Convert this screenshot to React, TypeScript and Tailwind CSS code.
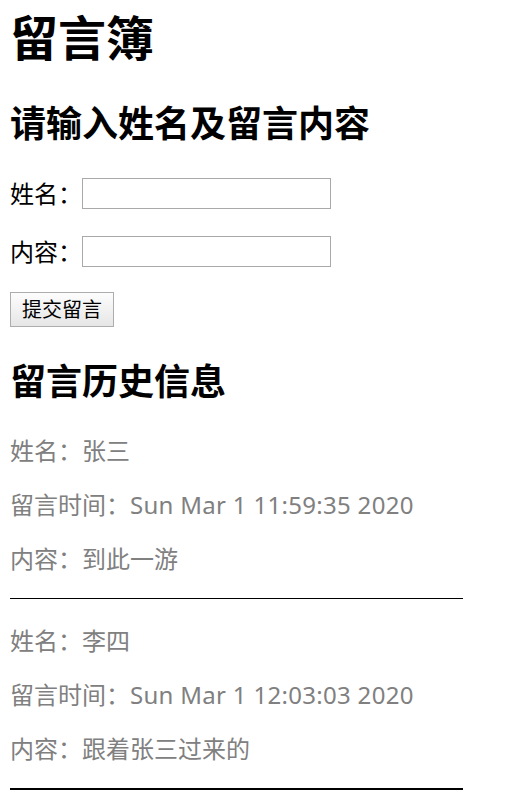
import { useState } from 'react'

const messages = [
  { name: '张三', time: 'Sun Mar 1 11:59:35 2020', content: '到此一游' },
  { name: '李四', time: 'Sun Mar 1 12:03:03 2020', content: '跟着张三过来的' },
]

const font = "font-['Noto_Sans','Noto_Sans_CJK_SC',sans-serif]"

export default function App() {
  const [name, setName] = useState('')
  const [content, setContent] = useState('')

  return (
    <div className={`${font} min-h-[809px] bg-white px-[10px] text-black`}>
      <h1 className="mt-[6px] text-[48px] font-bold leading-[64px]">留言簿</h1>
      <h2 className="mt-[30px] text-[36px] font-bold leading-[48px]">请输入姓名及留言内容</h2>

      <div className="mt-[30px] flex h-[31px] items-center">
        <label className="text-[24px] leading-[31px]">姓名：</label>
        <input
          value={name}
          onChange={(e) => setName(e.target.value)}
          className="h-[31px] w-[249px] border border-[#a9a9a9] bg-white px-1 text-[20px] outline-none"
        />
      </div>
      <div className="mt-[27px] flex h-[31px] items-center">
        <label className="text-[24px] leading-[31px]">内容：</label>
        <input
          value={content}
          onChange={(e) => setContent(e.target.value)}
          className="h-[31px] w-[249px] border border-[#a9a9a9] bg-white px-1 text-[20px] outline-none"
        />
      </div>
      <button className="mt-[25px] flex h-[35px] w-[104px] items-center justify-center border border-[#adadad] bg-gradient-to-b from-[#fdfdfd] to-[#e6e6e6] text-[20px] leading-none">
        提交留言
      </button>

      <h2 className="mt-[31px] text-[36px] font-bold leading-[48px]">留言历史信息</h2>

      <div className="mt-[29px] text-[24px] leading-[32px] text-[#808080]">
        {messages.map((m, i) => (
          <div key={i} className={i > 0 ? 'mt-[26px]' : ''}>
            <p>姓名：{m.name}</p>
            <p className="mt-[22px]">
              留言时间：<span className="tracking-[0.3px]">{m.time}</span>
            </p>
            <p className="mt-[22px]">内容：{m.content}</p>
            <hr className={`mt-[23px] w-[453px] border-black ${i === messages.length - 1 ? 'border-t-2' : 'border-t'}`} />
          </div>
        ))}
      </div>
    </div>
  )
}
